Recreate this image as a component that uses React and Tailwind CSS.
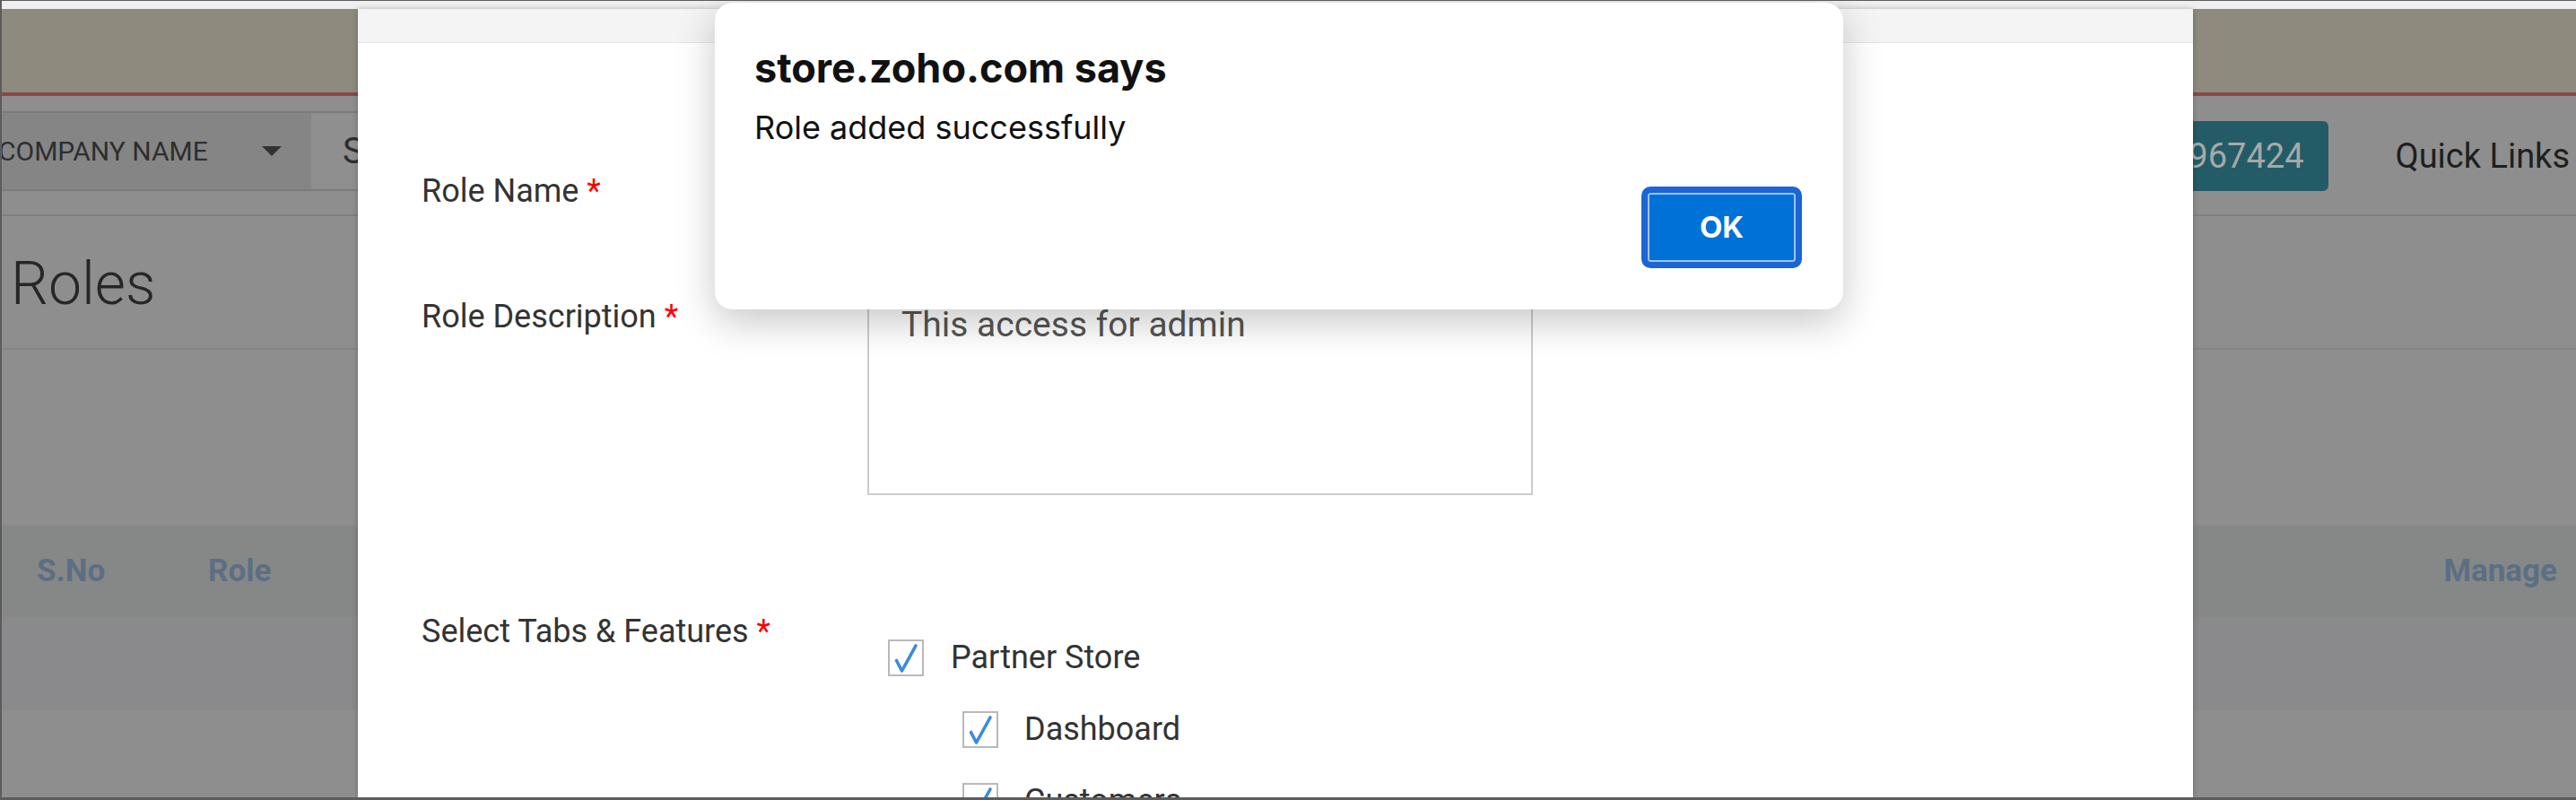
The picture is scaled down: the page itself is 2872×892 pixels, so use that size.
import React from "react";

const roboto = "font-['Roboto',sans-serif]";
const inter = "font-['Inter','Noto_Sans',sans-serif]";

// checked box with blue tick
const Check = () => (
  <span className="flex h-[41px] w-[40px] shrink-0 border-2 border-[#b9b9b9] bg-white">
    <svg viewBox="0 0 36 37" className="h-full w-full">
      <path
        d="M7.5 21.5 L13.5 33 L29 5"
        fill="none"
        stroke="#3b8ae0"
        strokeWidth="3.6"
        strokeLinecap="round"
        strokeLinejoin="round"
      />
    </svg>
  </span>
);

const Feature = ({ label, sub }) => (
  <div className={`flex h-[48px] items-center ${sub ? "pl-[83px]" : ""}`}>
    <Check />
    <span className={`${sub ? "ml-[29px]" : "ml-[30px]"} text-[36px] leading-[48px] text-[#333]`}>
      {label}
    </span>
  </div>
);

const Label = ({ children, className = "" }) => (
  <div className={`text-[36px] leading-[48px] text-[#333] ${className}`}>
    {children} <span className="text-[#f00]">*</span>
  </div>
);

export default function App() {
  return (
    <div
      className={`relative h-[892px] w-[2872px] overflow-hidden border-t border-b-[3px] border-l-2 border-[#5c5c5c] bg-[#8e8e8e] ${roboto}`}
    >
      {/* dimmed page behind the modal */}
      <div className="flex flex-col">
        <div className="h-[9px] bg-[#efefef]" />
        <div className="h-[93px] bg-[#8e8a7d]" />
        <div className="h-[4px] bg-[#8a4745]" />

        {/* nav */}
        <div className="h-[134px] border-b-2 border-[#7f7f7f] pt-[17px]">
          <div className="flex h-[89px] items-stretch">
            <div className="flex w-[345px] shrink-0 items-center whitespace-nowrap border-y-2 border-[#7b7b7b] bg-[#858585]">
              <span className="ml-[-4px] text-[30px] uppercase text-[#2e2e2e]">Company Name</span>
              <span className="ml-[60px] h-0 w-0 border-x-[11px] border-t-[11px] border-x-transparent border-t-[#333]" />
            </div>
            <div className="flex min-w-0 flex-1 items-center border-y-2 border-[#7b7b7b] bg-[#8f8f8f] pl-[35px]">
              <span className="text-[40px] text-[#2e2e2e]">Search</span>
            </div>
            <div className="ml-[120px] flex shrink-0 items-end">
              <div className="flex h-[78px] items-center whitespace-nowrap rounded-[6px] bg-[#235c66] pl-[40px] pr-[27px] text-[38px] text-[#a8a8a8]">
                Support 044 67967424
              </div>
            </div>
            <div className="ml-[75px] mr-[7px] flex shrink-0 items-center whitespace-nowrap pt-[12px] text-[38px] text-[#1f1f1f]">
              Quick Links
            </div>
          </div>
        </div>

        {/* heading */}
        <div className="h-[149px] border-b-2 border-[#858383] pl-[10px] pt-[36px]">
          <div className="text-[66px] font-light leading-[80px] text-[#262626]">Roles</div>
        </div>

        <div className="h-[196px]" />

        {/* table */}
        <div className="flex h-[102px] items-center bg-[#868787] pr-[21px] text-[35px] font-bold text-[#5b6f84]">
          <span className="ml-[39px] w-[191px]">S.No</span>
          <span>Role</span>
          <span className="ml-auto">Manage</span>
        </div>
        <div className="h-[104px] bg-[#8a8a8c]" />
      </div>

      {/* add role modal */}
      <div className="absolute bottom-0 left-[397px] top-[9px] w-[2046px] bg-white shadow-[0_0_6px_rgba(0,0,0,0.25)]">
        <div className="h-[38px] border-b border-[#e4e4e4] bg-[#f4f4f4]" />
        <div className="flex flex-col pl-[71px] pt-[137px]">
          <div className="flex items-start">
            <Label className="mt-[4px] w-[497px]">Role Name</Label>
            <div className="h-[64px] w-[742px] border-2 border-[#cccccc]" />
          </div>

          <div className="mt-[73px] flex items-start">
            <Label className="mt-[7px] w-[497px]">Role Description</Label>
            <div className="h-[230px] w-[742px] border-2 border-[#cccccc] pl-[36px] pt-[13px] text-[39px] leading-[50px] text-[#555]">
              This access for admin
            </div>
          </div>

          <div className="mt-[128px] flex items-start">
            <Label className="w-[497px]">Select Tabs &amp; Features</Label>
            <div className="mt-[29px] flex flex-col gap-[32px] pl-[23px]">
              <Feature label="Partner Store" />
              <Feature label="Dashboard" sub />
              <Feature label="Customers" sub />
            </div>
          </div>
        </div>
      </div>

      {/* browser alert */}
      <div
        className={`absolute left-[795px] top-[2px] flex h-[342px] w-[1258px] flex-col rounded-[20px] bg-white pl-[44px] pr-[46px] pt-[47px] shadow-[0_14px_44px_rgba(0,0,0,0.22)] ${inter}`}
      >
        <div className="text-[45px] font-bold leading-[52px] text-[#111]">store.zoho.com says</div>
        <div className="mt-[18px] text-[36px] leading-[44px] text-[#111]">Role added successfully</div>
        <div className="mt-[44px] flex justify-end">
          <button className="flex h-[91px] w-[179px] items-center justify-center rounded-[10px] border-[7px] border-[#1a66d6] bg-[#0071d6] text-[33px] font-bold text-white shadow-[inset_0_0_0_2px_#9ec3f1]">
            OK
          </button>
        </div>
      </div>
    </div>
  );
}
